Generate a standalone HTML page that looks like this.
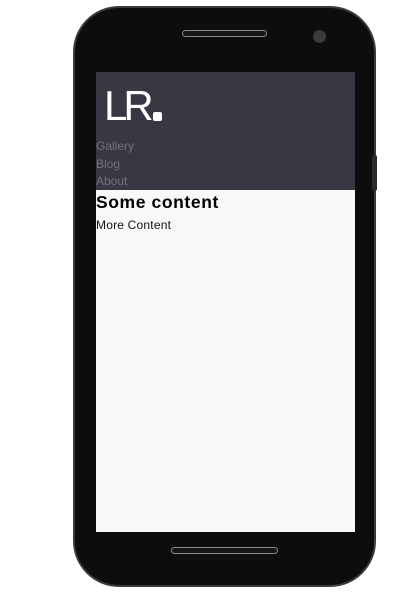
<!DOCTYPE html>
<html><head><style>
body{margin:0;width:417px;height:599px;background:#fff;position:relative;overflow:hidden;font-family:"Liberation Sans",sans-serif}
.phone{position:absolute;left:75px;top:8px;width:299px;height:577px;background:#0d0d0d;border-radius:44px;box-shadow:0 0 0 2px #3a3a40}
.btn{position:absolute;left:372px;top:155px;width:5px;height:36px;background:#2a2a2e;border-radius:2px}
.spk{position:absolute;border:1.5px solid #8a8a90;border-radius:5px;background:#151515}
.cam{position:absolute;left:313px;top:30px;width:13px;height:13px;border-radius:50%;background:#3a3a40}
.screen{position:absolute;left:96px;top:72px;width:259px;height:460px;background:#f8f8f8;overflow:hidden}
.hdr{height:118px;background:#383842;position:relative}
.logo{position:absolute;left:8px;top:9px;color:#fff;font-size:42px;line-height:50px;letter-spacing:-4px}
.dot{position:absolute;left:57px;top:40px;width:9px;height:9px;background:#fff;border-radius:2px}
.nav{position:absolute;left:0;top:66px;color:#727280;font-size:12px;line-height:17.5px}
h1{margin:0;font-size:17.5px;font-weight:bold;line-height:24px;color:#000;letter-spacing:0.6px}
p{margin:2px 0 0;font-size:12px;line-height:18px;color:#111;letter-spacing:0.2px}
</style></head><body>
<div class="phone"></div>
<div class="btn"></div>
<div class="spk" style="left:182px;top:30px;width:83px;height:5px"></div>
<div class="cam"></div>
<div class="spk" style="left:171px;top:547px;width:105px;height:5px"></div>
<div class="screen">
<div class="hdr"><div class="logo">LR</div><div class="dot"></div>
<div class="nav">Gallery<br>Blog<br>About</div></div>
<h1>Some content</h1>
<p>More Content</p>
</div>
</body></html>
